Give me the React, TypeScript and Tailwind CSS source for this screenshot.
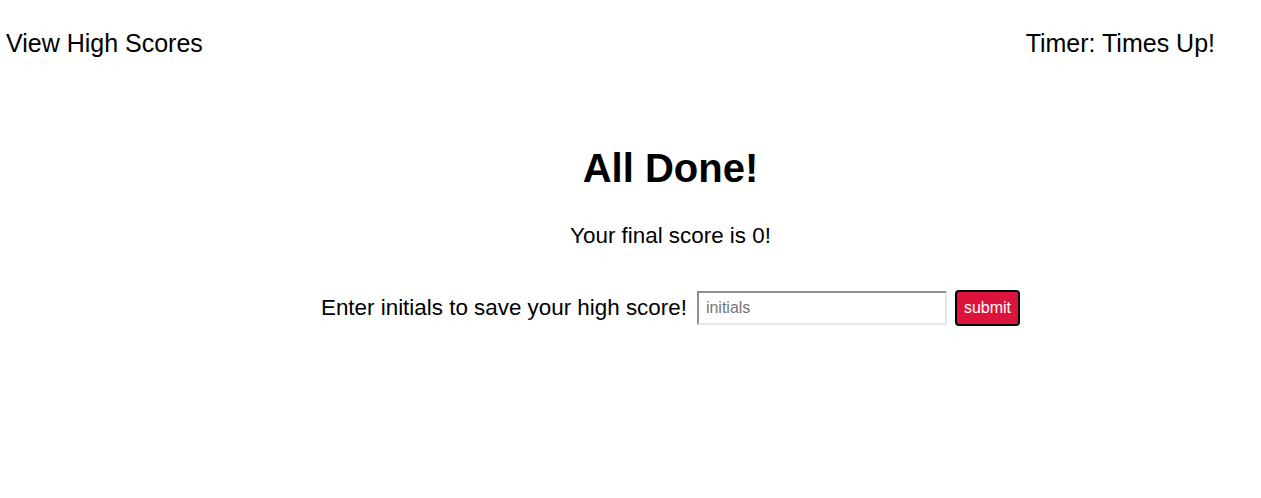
export default function App() {
  return (
    <main className="min-h-screen bg-white text-black font-['Liberation_Sans',Arial,sans-serif]">
      {/* Header */}
      <header className="flex items-center justify-between pl-[6px] pr-[46px] pt-[29px] text-[25px] leading-[28px]">
        <span>View High Scores</span>
        <span>Timer: Times Up!</span>
      </header>

      {/* Result */}
      <section className="flex flex-col items-center pt-[88px] pl-[80px]">
        <h1 className="text-[40px] leading-[46px] font-bold">All Done!</h1>
        <p className="mt-[32px] text-[22.4px] leading-[26px]">Your final score is 0!</p>
        <form className="mt-[41px] flex items-center" onSubmit={(e) => e.preventDefault()}>
          <label htmlFor="initials" className="text-[22.4px] leading-[26px] mr-[10px]">
            Enter initials to save your high score!
          </label>
          <input
            id="initials"
            type="text"
            placeholder="initials"
            className="w-[250px] h-[34px] border-2 border-t-[#8f8f8f] border-l-[#8f8f8f] border-b-[#e6e6e6] border-r-[#e6e6e6] px-[7px] text-[16px] placeholder:text-[#757575] outline-none"
          />
          <button
            type="submit"
            className="ml-[8px] h-[36px] px-[7px] bg-[#dc143c] text-white text-[16px] border-2 border-black rounded-[4px]"
          >
            submit
          </button>
        </form>
      </section>
    </main>
  );
}
